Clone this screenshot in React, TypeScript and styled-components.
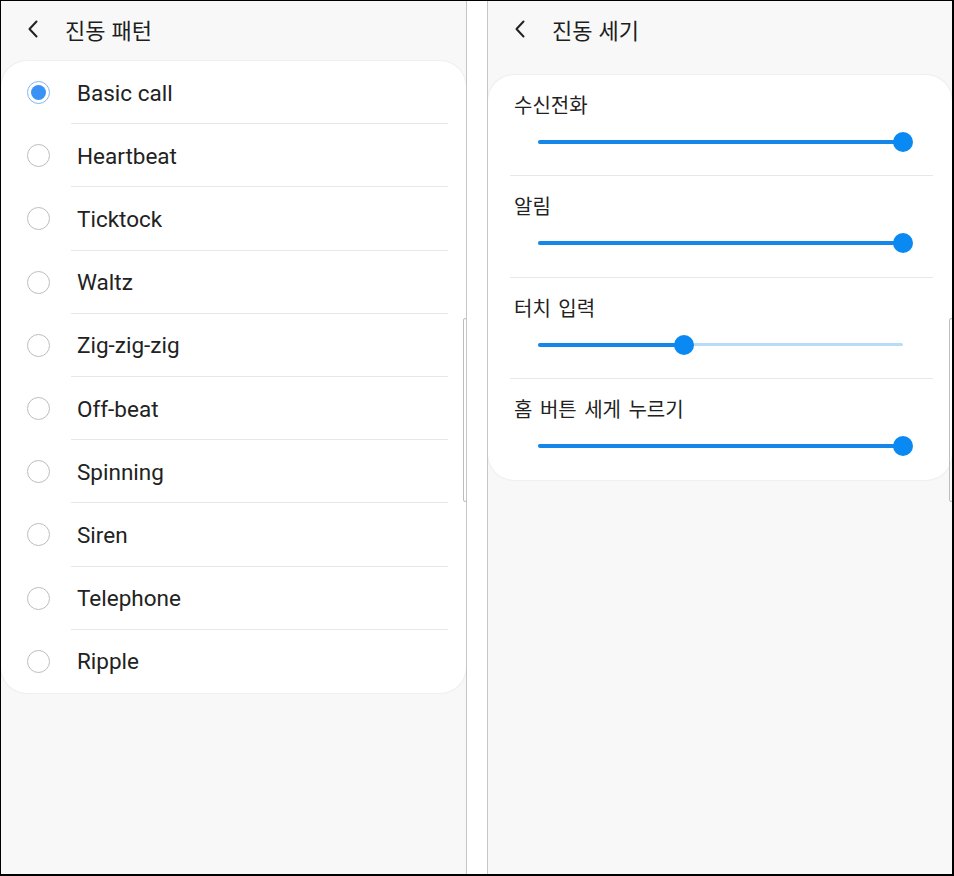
import styled, { createGlobalStyle } from 'styled-components';

const patterns = [
  'Basic call',
  'Heartbeat',
  'Ticktock',
  'Waltz',
  'Zig-zig-zig',
  'Off-beat',
  'Spinning',
  'Siren',
  'Telephone',
  'Ripple',
];

const levels = [
  { label: '수신전화', value: 1 },
  { label: '알림', value: 1 },
  { label: '터치 입력', value: 0.4 },
  { label: '홈 버튼 세게 누르기', value: 1 },
];

const GlobalStyle = createGlobalStyle`
  html, body {
    margin: 0;
    padding: 0;
    background: #fff;
  }
  body {
    font-family: Roboto, 'Noto Sans CJK KR', sans-serif;
    color: #222;
  }
`;

const BackIcon = () => (
  <svg width="12" height="18" viewBox="0 0 12 18" fill="none">
    <path d="M9.5 1.5 L2.5 9 L9.5 16.5" stroke="#222" strokeWidth="2" strokeLinecap="round" strokeLinejoin="round" />
  </svg>
);

const App: React.FC = () => {
  return (
    <>
      <GlobalStyle />
      <Frame>
        <Screen side="left">
          <Header $height={60}>
            <BackButton>
              <BackIcon />
            </BackButton>
            <Title>진동 패턴</Title>
          </Header>
          <Card>
            {patterns.map((name, i) => (
              <PatternRow key={name} $last={i === patterns.length - 1}>
                <Radio $checked={i === 0} />
                <PatternName>{name}</PatternName>
              </PatternRow>
            ))}
          </Card>
          <ScrollThumb />
        </Screen>
        <Gutter />
        <Screen side="right">
          <Header $height={74}>
            <BackButton>
              <BackIcon />
            </BackButton>
            <Title>진동 세기</Title>
          </Header>
          <Card>
            {levels.map((lvl, i) => (
              <LevelRow key={lvl.label} $last={i === levels.length - 1}>
                <LevelLabel>{lvl.label}</LevelLabel>
                <Slider>
                  <Track />
                  <ActiveTrack style={{ width: `${lvl.value * 100}%` }} />
                  <Thumb style={{ left: `${lvl.value * 100}%` }} />
                </Slider>
              </LevelRow>
            ))}
          </Card>
          <ScrollThumb />
        </Screen>
      </Frame>
    </>
  );
};

const Frame = styled.div`
  box-sizing: border-box;
  width: 954px;
  height: 876px;
  border-style: solid;
  border-color: #000;
  border-width: 1px 2px 2px 1px;
  display: flex;
  background: #fff;
  overflow: hidden;
`;

const Screen = styled.div<{ side: 'left' | 'right' }>`
  position: relative;
  box-sizing: border-box;
  width: ${(p) => (p.side === 'left' ? '466px' : '465px')};
  height: 100%;
  background: #f8f8f8;
  ${(p) => (p.side === 'left' ? 'border-right: 1px solid #c6c6c6;' : 'border-left: 1px solid #c6c6c6;')}
  display: flex;
  flex-direction: column;
  overflow: hidden;
`;

const Gutter = styled.div`
  width: 20px;
  background: #fff;
`;

const Header = styled.div<{ $height: number }>`
  height: ${(p) => p.$height}px;
  flex-shrink: 0;
  display: flex;
  align-items: center;
  padding-left: 26px;
  gap: 26px;
  padding-bottom: ${(p) => (p.$height > 60 ? 18 : 4)}px;
  box-sizing: border-box;
`;

const BackButton = styled.div`
  width: 12px;
  height: 18px;
  display: flex;
`;

const Title = styled.div`
  font-family: 'Noto Sans CJK KR', sans-serif;
  font-size: 22px;
  color: #1e1e1e;
  word-spacing: 1px;
`;

const Card = styled.div`
  background: #fff;
  border-radius: 26px;
  box-shadow: 0 0 2px rgba(0, 0, 0, 0.12);
  overflow: hidden;
`;

const PatternRow = styled.div<{ $last: boolean }>`
  position: relative;
  height: 63.2px;
  display: flex;
  align-items: center;
  padding-left: 26px;
  box-sizing: border-box;
  &::after {
    content: '';
    display: ${(p) => (p.$last ? 'none' : 'block')};
    position: absolute;
    left: 70px;
    right: 18px;
    bottom: 0;
    height: 1px;
    background: #e8e8e8;
  }
`;

const Radio = styled.div<{ $checked: boolean }>`
  box-sizing: border-box;
  width: 23px;
  height: 23px;
  border-radius: 50%;
  border: 1px solid ${(p) => (p.$checked ? '#7fb6ec' : '#bdbdbd')};
  display: flex;
  align-items: center;
  justify-content: center;
  &::after {
    content: '';
    display: ${(p) => (p.$checked ? 'block' : 'none')};
    width: 15px;
    height: 15px;
    border-radius: 50%;
    background: #3b92f5;
  }
`;

const PatternName = styled.div`
  margin-left: 27px;
  font-size: 22.5px;
  color: #222;
`;

const LevelRow = styled.div<{ $last: boolean }>`
  position: relative;
  height: 101.3px;
  box-sizing: border-box;
  padding: 17px 0 0 26px;
  &::after {
    content: '';
    display: ${(p) => (p.$last ? 'none' : 'block')};
    position: absolute;
    left: 22px;
    right: 19px;
    bottom: 0;
    height: 1px;
    background: #e8e8e8;
  }
`;

const LevelLabel = styled.div`
  font-family: 'Noto Sans CJK KR', sans-serif;
  font-size: 20px;
  line-height: 26px;
  word-spacing: 3px;
  color: #222;
`;

const Slider = styled.div`
  position: relative;
  margin: 22px 0 0 24px;
  width: 365px;
  height: 4px;
`;

const Track = styled.div`
  position: absolute;
  left: 0;
  right: 0;
  top: 0.5px;
  height: 3px;
  border-radius: 2px;
  background: #b6dcf7;
`;

const ActiveTrack = styled.div`
  position: absolute;
  left: 0;
  top: 0;
  height: 4px;
  border-radius: 2px;
  background: #1487e8;
`;

const Thumb = styled.div`
  position: absolute;
  top: 2px;
  width: 20px;
  height: 20px;
  margin: -10px 0 0 -10px;
  border-radius: 50%;
  background: #0a89f2;
`;

const ScrollThumb = styled.div`
  position: absolute;
  top: 317px;
  right: -1px;
  height: 184px;
  width: 4px;
  border: 1px solid #bdbdbd;
  border-radius: 4px;
  box-sizing: border-box;
`;

export default App;
